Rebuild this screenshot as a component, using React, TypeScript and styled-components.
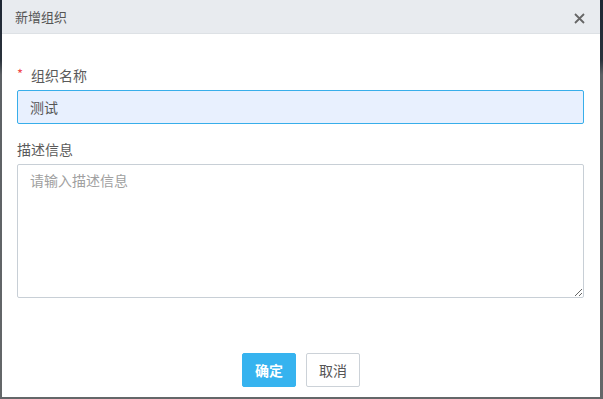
import React, { useState } from 'react';
import styled, { createGlobalStyle } from 'styled-components';

const GlobalStyle = createGlobalStyle`
  html, body {
    margin: 0;
    padding: 0;
    height: 100%;
  }
  body {
    background: linear-gradient(180deg, #1d2633 0px, #2a323c 60px, #5d6165 75px, #646769 100%);
    font-family: "Noto Sans CJK SC", "Noto Sans", sans-serif;
    overflow: hidden;
  }
`;

const Overlay = styled.div`
  width: 603px;
  height: 399px;
  padding: 0 3px 2px 2px;
  box-sizing: border-box;
`;

const Dialog = styled.div`
  background: #fff;
  height: 100%;
  display: flex;
  flex-direction: column;
`;

const Header = styled.div`
  height: 34px;
  background: #e8ebef;
  border-bottom: 1px solid #dde1e5;
  display: flex;
  align-items: center;
  justify-content: space-between;
  padding: 0 14px 0 13px;
  box-sizing: border-box;
`;

const Title = styled.span`
  font-size: 13px;
  color: #555;
`;

const CloseButton = styled.button`
  background: none;
  border: none;
  padding: 0;
  margin-top: 3px;
  width: 14px;
  height: 14px;
  display: flex;
  align-items: center;
  justify-content: center;
  cursor: pointer;
`;

const Body = styled.div`
  flex: 1;
  padding: 31px 16px 0 15px;
  display: flex;
  flex-direction: column;
`;

const Label = styled.label`
  font-size: 14px;
  color: #5a5a5a;
  line-height: 20px;
  display: flex;
  align-items: center;
  margin-bottom: 5px;
`;

const Required = styled.span`
  color: #f0484a;
  font-size: 13px;
  margin-right: 8px;
  margin-top: -2px;
`;

const TextInput = styled.input`
  height: 34px;
  box-sizing: border-box;
  border: 1px solid #38aeea;
  border-radius: 2px;
  background: #e8f0fe;
  padding: 0 12px;
  font-size: 14px;
  color: #555;
  font-family: inherit;
  outline: none;
  margin-bottom: 15px;
`;

const TextArea = styled.textarea`
  height: 134px;
  box-sizing: border-box;
  border: 1px solid #c8cfd6;
  border-radius: 2px;
  padding: 5px 12px;
  font-size: 14px;
  font-family: inherit;
  color: #555;
  outline: none;
  resize: both;

  &::placeholder {
    color: #a0a0a0;
  }
`;

const Footer = styled.div`
  display: flex;
  justify-content: center;
  gap: 10px;
  padding-bottom: 10px;
`;

const Button = styled.button<{ $primary?: boolean }>`
  width: 54px;
  height: 34px;
  box-sizing: border-box;
  border-radius: 2px;
  font-size: 14px;
  font-family: inherit;
  cursor: pointer;
  background: ${(p) => (p.$primary ? '#36b3ef' : '#fff')};
  color: ${(p) => (p.$primary ? '#fff' : '#555')};
  border: 1px solid ${(p) => (p.$primary ? '#36b3ef' : '#ccd2d8')};
  font-weight: ${(p) => (p.$primary ? 'bold' : 'normal')};
`;

const App: React.FC = () => {
  const [name, setName] = useState('测试');
  const [desc, setDesc] = useState('');

  return (
    <>
      <GlobalStyle />
      <Overlay>
        <Dialog>
          <Header>
            <Title>新增组织</Title>
            <CloseButton aria-label="close">
              <svg width="11" height="11" viewBox="0 0 11 11">
                <path d="M1 1 L10 10 M10 1 L1 10" stroke="#666" strokeWidth="1.8" />
              </svg>
            </CloseButton>
          </Header>
          <Body>
            <Label>
              <Required>*</Required>组织名称
            </Label>
            <TextInput value={name} onChange={(e) => setName(e.target.value)} />
            <Label>描述信息</Label>
            <TextArea
              placeholder="请输入描述信息"
              value={desc}
              onChange={(e) => setDesc(e.target.value)}
            />
          </Body>
          <Footer>
            <Button $primary>确定</Button>
            <Button>取消</Button>
          </Footer>
        </Dialog>
      </Overlay>
    </>
  );
};

export default App;
